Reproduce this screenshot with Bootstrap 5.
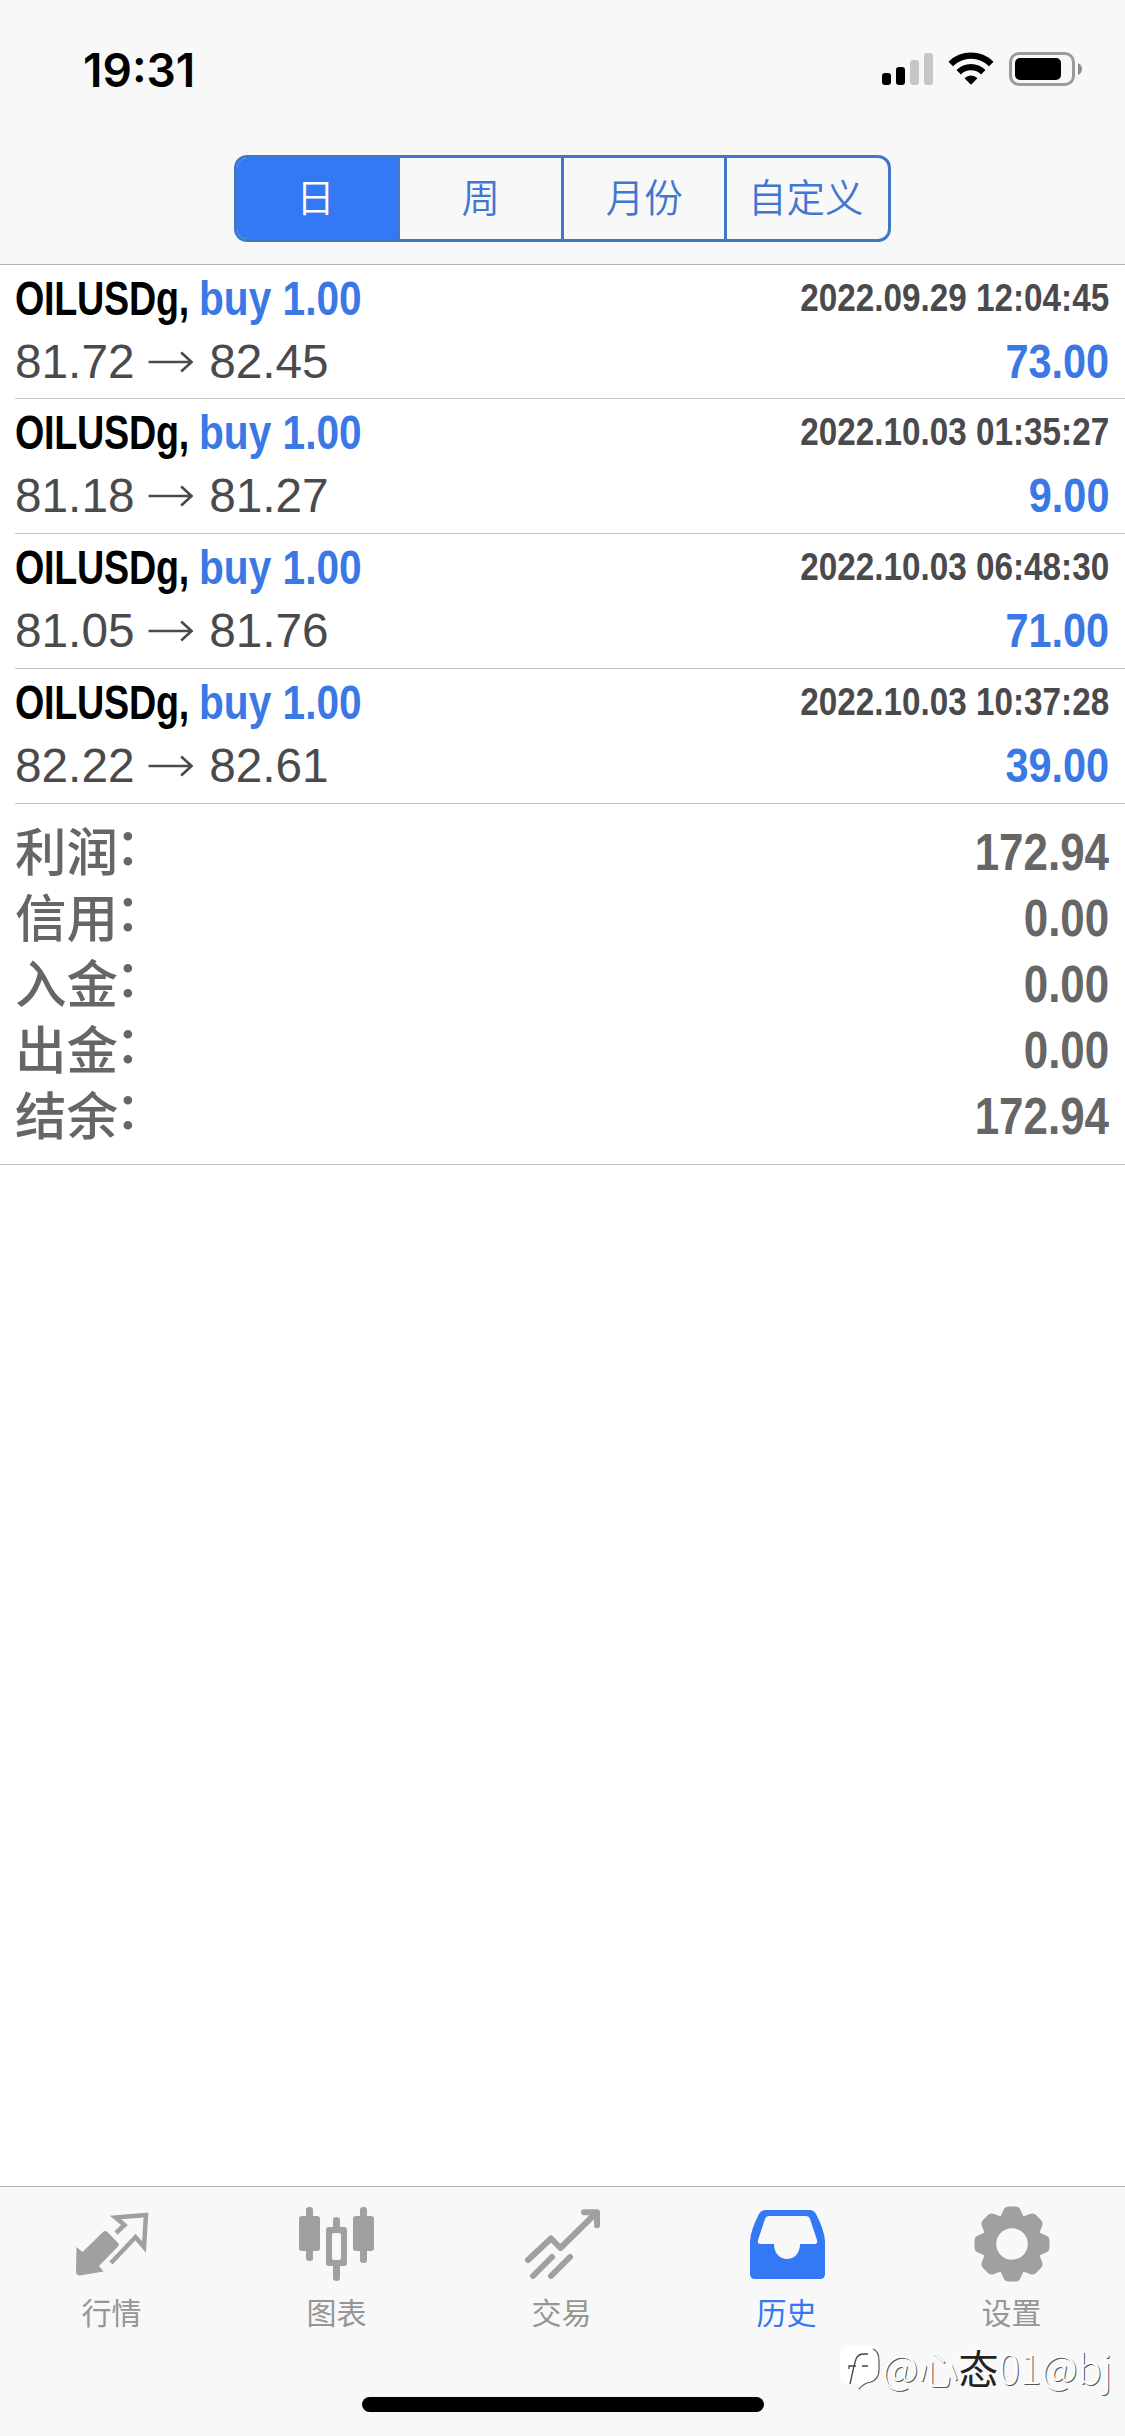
<!DOCTYPE html>
<html lang="zh-CN">
<head>
<meta charset="utf-8">
<meta name="viewport" content="width=device-width, initial-scale=1">
<title>历史</title>
<link rel="stylesheet" href="https://cdn.jsdelivr.net/npm/bootstrap@5.3.0/dist/css/bootstrap.min.css">
<style>
:root{--blue:#3378f5;--txtblue:#3a78e6}
body{font-family:"Liberation Sans","Noto Sans CJK SC",sans-serif;background:#fff;color:#000}
.screen{width:1125px;height:2436px;overflow:hidden}
.topbar{height:265px;background:#f8f8f8;border-bottom:1px solid #b2b2b2}
.statusbar{height:155px;padding:46px 40px 0 83px}
.clock{font-family:Inter,sans-serif;font-weight:600;font-size:46px;line-height:49px}
.signals{margin-top:4px}
.segments{width:657px;height:87px;border:3px solid #4077c6;border-radius:13px;overflow:hidden;font-family:"Noto Sans CJK SC",sans-serif;font-size:38.5px;font-weight:350}
.segments .seg{flex:0 0 auto;border-radius:0;border:0;border-left:3px solid #4077c6;color:#4077d0;font-size:inherit;font-weight:inherit;padding:0 0 6px;line-height:1;width:164.500px}
.segments .seg.active{background:var(--blue);color:#fff;border-left:0;width:161px;padding-right:4px}
.segments .seg:last-child{padding-right:4px}
.trade{height:135px;margin-left:15px;padding-right:16px;border-bottom:1px solid #c4c4c6}
.trade:first-child{height:134px}
.trade .line1{height:64px;padding-top:6px}
.trade .line2{height:60px;line-height:66px;font-size:48px;color:#4a4a4c}
.prices{height:66px;transform:scaleX(.995);transform-origin:0 50%}
.prices svg{margin:0 16px 0 14px}
.cond{display:inline-block;font-weight:700;white-space:nowrap;font-size:48px;line-height:56px}
.sym{transform:scaleX(.785);transform-origin:0 50%;width:184px;letter-spacing:-.3px}
.side{transform:scaleX(.847);transform-origin:0 50%;color:var(--txtblue)}
.stamp{font-size:39px;line-height:54px;color:#4a4a4c;transform:scaleX(.853);transform-origin:100% 50%}
.gain{transform:scaleX(.863);transform-origin:100% 50%;color:var(--txtblue);line-height:66px}
.totals{height:361px;padding:16px 16px 0 15px;border-bottom:1px solid #c4c4c6;color:#666}
.totals .item{height:66px}
.totals .lbl{font-weight:500;font-size:51.5px;line-height:66px}
.totals .colon{display:inline-block;transform:translate(-3px,-6px)}
.totals .sum{font-size:52px;line-height:64px;transform:scaleX(.845);transform-origin:100% 50%}
.tabs{height:250px;background:#f8f8f8;border-top:1px solid #b2b2b2}
.tabs .tab{width:225px;color:#969696;font-family:"Noto Sans CJK SC",sans-serif;font-size:30px;line-height:40px;text-decoration:none;padding-top:17px;padding-right:2px}
.tabs .tab.active{color:var(--blue)}
.tabs svg{width:80px;height:80px}
.tabs .cap{margin-top:7px}
.homebar{width:402px;height:15px;border-radius:8px;background:#000;left:362px;top:2397px}
.wmark{left:840px;top:2341px;height:52px;font-family:"Noto Sans CJK SC",sans-serif;font-weight:300;font-size:40px;line-height:52px;color:#fff;text-shadow:1px 1px 0 #555;white-space:nowrap}
.wmark .ink{color:#222;font-weight:400;text-shadow:-1.500px -1.500px 0 #fff}
</style>
</head>
<body>
<div class="screen position-relative d-flex flex-column">
  <header class="topbar flex-shrink-0">
    <div class="statusbar d-flex justify-content-between align-items-start">
      <span class="clock">19:31</span>
      <svg class="signals" width="205" height="40" viewBox="880 50 205 40">
        <rect x="882" y="73" width="9" height="12" rx="3"/><rect x="896" y="67" width="9" height="18" rx="3"/>
        <rect x="910" y="60" width="9" height="25" rx="3" fill="#c6c6c6"/><rect x="924" y="53" width="9" height="32" rx="3" fill="#c6c6c6"/>
        <path d="M948.5 61.8l4.4 4.5a25.4 25.4 0 0 1 36.2 0l4.4-4.5a31.7 31.7 0 0 0-45 0z"/>
        <path d="M956.500 70l4.400 4.400a14.200 14.200 0 0 1 20.200 0l4.400-4.400a20.500 20.500 0 0 0-29 0z"/>
        <path d="M964.500 78.200l6.500 6.600 6.500-6.600a9.200 9.200 0 0 0-13 0z"/>
        <rect x="1010.500" y="53.500" width="63" height="31" rx="8.500" fill="none" stroke="#9b9b9b" stroke-width="3"/>
        <rect x="1015" y="58" width="46" height="22" rx="5"/><path d="M1078 63q4 2 4 6t-4 6z" fill="#8c8c8c"/>
      </svg>
    </div>
    <div class="segments btn-group d-flex mx-auto" role="group">
      <button class="btn seg active">日</button><button class="btn seg">周</button><button class="btn seg">月份</button><button class="btn seg">自定义</button>
    </div>
  </header>
  <main class="flex-grow-1">
    <div class="trade">
      <div class="line1 d-flex justify-content-between"><div class="d-flex"><span class="cond sym">OILUSDg,</span><span class="cond side">buy 1.00</span></div><span class="cond stamp">2022.09.29 12:04:45</span></div>
      <div class="line2 d-flex justify-content-between"><span class="prices d-flex align-items-center">81.72<svg width="45" height="24" viewBox="0 0 45 24" fill="none" stroke="#4a4a4c" stroke-width="2.600"><path d="M0 12h43M33 2.500L43.500 12L33 21.500"/></svg>82.45</span><span class="cond gain">73.00</span></div>
    </div>
    <div class="trade">
      <div class="line1 d-flex justify-content-between"><div class="d-flex"><span class="cond sym">OILUSDg,</span><span class="cond side">buy 1.00</span></div><span class="cond stamp">2022.10.03 01:35:27</span></div>
      <div class="line2 d-flex justify-content-between"><span class="prices d-flex align-items-center">81.18<svg width="45" height="24" viewBox="0 0 45 24" fill="none" stroke="#4a4a4c" stroke-width="2.600"><path d="M0 12h43M33 2.500L43.500 12L33 21.500"/></svg>81.27</span><span class="cond gain">9.00</span></div>
    </div>
    <div class="trade">
      <div class="line1 d-flex justify-content-between"><div class="d-flex"><span class="cond sym">OILUSDg,</span><span class="cond side">buy 1.00</span></div><span class="cond stamp">2022.10.03 06:48:30</span></div>
      <div class="line2 d-flex justify-content-between"><span class="prices d-flex align-items-center">81.05<svg width="45" height="24" viewBox="0 0 45 24" fill="none" stroke="#4a4a4c" stroke-width="2.600"><path d="M0 12h43M33 2.500L43.500 12L33 21.500"/></svg>81.76</span><span class="cond gain">71.00</span></div>
    </div>
    <div class="trade">
      <div class="line1 d-flex justify-content-between"><div class="d-flex"><span class="cond sym">OILUSDg,</span><span class="cond side">buy 1.00</span></div><span class="cond stamp">2022.10.03 10:37:28</span></div>
      <div class="line2 d-flex justify-content-between"><span class="prices d-flex align-items-center">82.22<svg width="45" height="24" viewBox="0 0 45 24" fill="none" stroke="#4a4a4c" stroke-width="2.600"><path d="M0 12h43M33 2.500L43.500 12L33 21.500"/></svg>82.61</span><span class="cond gain">39.00</span></div>
    </div>
    <div class="totals">
      <div class="item d-flex justify-content-between"><span class="lbl">利润<span class="colon">：</span></span><span class="cond sum">172.94</span></div>
      <div class="item d-flex justify-content-between"><span class="lbl">信用<span class="colon">：</span></span><span class="cond sum">0.00</span></div>
      <div class="item d-flex justify-content-between"><span class="lbl">入金<span class="colon">：</span></span><span class="cond sum">0.00</span></div>
      <div class="item d-flex justify-content-between"><span class="lbl">出金<span class="colon">：</span></span><span class="cond sum">0.00</span></div>
      <div class="item d-flex justify-content-between"><span class="lbl">结余<span class="colon">：</span></span><span class="cond sum">172.94</span></div>
    </div>
  </main>
  <nav class="tabs d-flex flex-shrink-0">
    <a class="tab d-flex flex-column align-items-center"><svg viewBox="71 2203 80 80" fill="#a0a0a0"><path d="M75.500 2246l6 5 20.500-20q2.500-2 4.500 0l11 11.500q1 1.500-.5 3L98 2265l4.500 5.500-23.500 4q-4 0-4-4z"/><path d="M115 2232l8.500-8-9-7.500 30.500-2.500-2 32-8.500-10-24.500 26" fill="none" stroke="#a0a0a0" stroke-width="4.500"/></svg><span class="cap">行情</span></a>
    <a class="tab d-flex flex-column align-items-center"><svg viewBox="297 2203 80 80" fill="#a0a0a0"><rect x="299" y="2215" width="21" height="35" rx="3"/><rect x="306" y="2206" width="7" height="54" rx="3"/><rect x="353" y="2215" width="21" height="35" rx="3"/><rect x="360" y="2206" width="7" height="56" rx="3"/><path fill-rule="evenodd" d="M329 2226h15q3 0 3 3v33q0 3-3 3h-15q-3 0-3-3v-33q0-3 3-3zM334 2232q-2 0-2 2v23q0 2 2 2h5q2 0 2-2v-23q0-2-2-2z"/><path d="M333 2227v-8q0-3 3.500-3t3.500 3v8zM333 2264v13q0 3 3.500 3t3.500-3v-13z"/></svg><span class="cap">图表</span></a>
    <a class="tab d-flex flex-column align-items-center"><svg viewBox="521 2203 80 80" fill="none" stroke="#a0a0a0" stroke-width="6" stroke-linejoin="round"><path stroke-linecap="round" d="M527 2259l23-21.500 9.500 9.500 36-35.500M583 2211.200h13v13M532 2275l19-19M550 2275l19-19"/></svg><span class="cap">交易</span></a>
    <a class="tab active d-flex flex-column align-items-center"><svg viewBox="746 2203 80 80"><path fill="#3378f5" fill-rule="evenodd" d="M765 2209h43q5 0 7 4 8 15 9 27v33q0 5-5 5h-65q-5 0-5-5v-33q1-12 9-27 2-4 7-4zM768 2215q-3 0-4 3l-7 21q-1 4 3 4h13c0 20 26 20 26 0h14q4 0 3-4l-7-21q-1-3-4-3z"/></svg><span class="cap">历史</span></a>
    <a class="tab d-flex flex-column align-items-center"><svg viewBox="-40 -40 80 80"><g fill="#a0a0a0"><g id="cogteeth"><path id="tooth" d="M-14-22L-8.500-34q1.500-3.500 5-3.500h7q3.500 0 5 3.500L14-22z"/><use href="#tooth" transform="rotate(45)"/><use href="#tooth" transform="rotate(90)"/><use href="#tooth" transform="rotate(135)"/></g><use href="#cogteeth" transform="rotate(180)"/></g><circle r="22.500" fill="none" stroke="#a0a0a0" stroke-width="13.500"/></svg><span class="cap">设置</span></a>
  </nav>
  <div class="homebar position-absolute"></div>
  <div class="wmark position-absolute d-flex align-items-center"><svg width="42" height="46" viewBox="0 -1 42 46"><path d="M9 1h22q8 1 8 13v13q0 8-9 11h-5l-6 6v-5H9Q0 38 0 28V12Q0 2 9 1z" fill="#fff"/><path d="M28 9h-4q-6 0-8 5l-2 7-4 18M9 24v-3h7M22 21h6" fill="none" stroke="#444" stroke-width="1.300"/><path d="M33 4q6 2 6 12v9q0 9-8 12-7 1-12 7" fill="none" stroke="#555" stroke-width="1.200"/></svg><span>@心<span class="ink">态</span>01@bj</span></div>
</div>
<script src="https://cdn.jsdelivr.net/npm/bootstrap@5.3.0/dist/js/bootstrap.bundle.min.js"></script>
</body>
</html>
